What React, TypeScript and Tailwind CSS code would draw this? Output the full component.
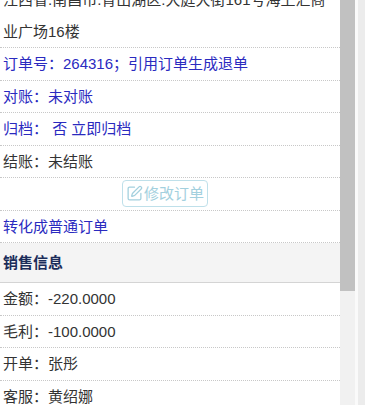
import { SquarePen } from "lucide-react";

const font = { fontFamily: '"Liberation Sans", "Noto Sans CJK SC", sans-serif' };

function Row({ children, blue }: { children: React.ReactNode; blue?: boolean }) {
  return (
    <div
      className={`border-b border-dotted border-[#c8c8c8] pl-[3px] text-[15px] leading-[31.5px] ${
        blue ? "text-[#2a2abf]" : "text-[#333]"
      }`}
    >
      {children}
    </div>
  );
}

export default function App() {
  return (
    <div className="flex h-[405px] w-[365px] overflow-hidden bg-white" style={font}>
      <div className="w-[340px] shrink-0">
        <div className="-mt-[16px]">
          <Row>江西省.南昌市.青山湖区.大庭大街161号海上汇商业广场16楼</Row>
          <Row blue>订单号：264316；引用订单生成退单</Row>
          <Row blue>对账：未对账</Row>
          <Row blue>归档： 否 立即归档</Row>
          <Row>结账：未结账</Row>
          <div className="flex h-[32.5px] items-center justify-center border-b border-dotted border-[#c8c8c8] pr-[10px]">
            <button className="flex h-[27px] items-center gap-[1px] rounded-[4px] border border-[#bfe0ea] px-[3px] text-[15px] text-[#a3d0de]">
              <SquarePen size={17} strokeWidth={1.8} />
              修改订单
            </button>
          </div>
          <Row blue>转化成普通订单</Row>
          <div className="border-b border-solid border-[#d4d4d4] bg-[#f4f4f4] pl-[3px] text-[15px] font-bold leading-[39px] text-[#1b2d5a]">
            销售信息
          </div>
          <Row>金额：-220.0000</Row>
          <Row>毛利：-100.0000</Row>
          <Row>开单：张彤</Row>
          <Row>客服：黄绍娜</Row>
        </div>
      </div>
      <div className="flex w-[15px] shrink-0 flex-col bg-[#f1f1f1]">
        <div className="h-[291px] bg-[#c1c1c1]" />
      </div>
      <div className="w-[3px] shrink-0 bg-[#fafafa]" />
      <div className="flex-1 bg-[#ececec]" />
    </div>
  );
}
